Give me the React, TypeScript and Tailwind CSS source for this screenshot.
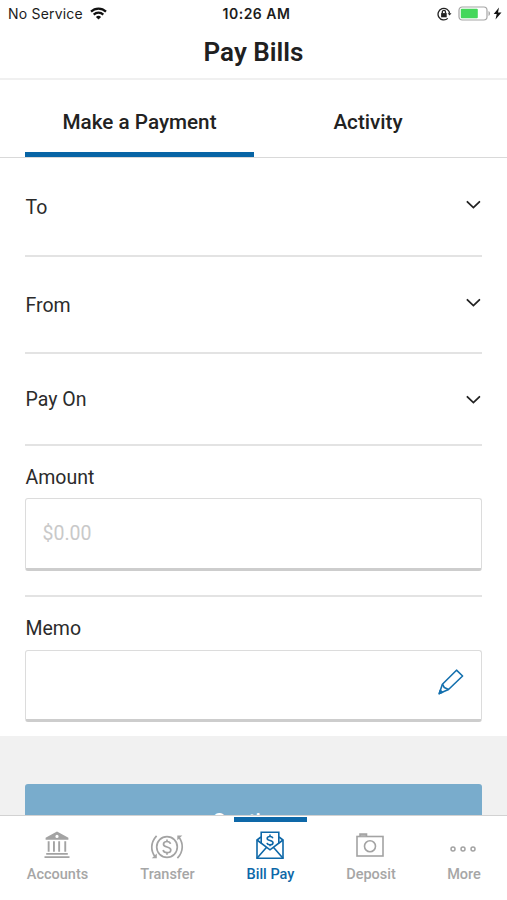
import React from "react";

const ROBOTO = "font-['Roboto',sans-serif]";

function StatusBar() {
  return (
    <div className="grid h-7 grid-cols-3 items-center pl-2 pr-[5px] font-['Inter',sans-serif] text-[14px] leading-7 text-[#1c1c1c]">
      <div className="flex items-center gap-[7px]">
        <span className="whitespace-nowrap tracking-[0.2px]">No Service</span>
        <svg className="-mt-px" width="17" height="13" viewBox="0 0 17 13" fill="none" stroke="#111" strokeWidth="2.2">
          <path d="M1 4.6a10.8 10.8 0 0 1 15 0" />
          <path d="M3.7 7.6a7 7 0 0 1 9.6 0" />
          <path d="M8.5 12.6 5.9 10a3.8 3.8 0 0 1 5.2 0z" fill="#111" stroke="none" />
        </svg>
      </div>
      <div className="whitespace-nowrap pl-[3px] text-center font-semibold tracking-[0.5px]">10:26 AM</div>
      <div className="flex items-center justify-end pb-px">
        <svg width="15" height="14" viewBox="0 0 15 14" fill="none" stroke="#222" strokeWidth="1.3">
          <path d="M10.8 11.4A5.8 5.8 0 1 1 12.6 6.5" />
          <path d="m10.6 6.3 2 2.3 1.9-2.3z" fill="#222" stroke="none" />
          <rect x="4.1" y="6.1" width="5.6" height="4.2" fill="#222" stroke="none" />
          <path d="M5.3 6.5V5a1.6 1.6 0 0 1 3.2 0v1.5" />
        </svg>
        <svg className="ml-[6px]" width="33" height="15" viewBox="0 0 33 15">
          <rect x="1" y="1" width="28" height="13" rx="3.2" fill="#fff" stroke="#a5a5a5" strokeWidth="1.2" />
          <rect x="2.8" y="2.8" width="17" height="9.4" rx="1" fill="#45d75b" />
          <path d="M30.5 5v5c2-.7 2-4.3 0-5z" fill="#a5a5a5" />
        </svg>
        <svg className="ml-[2px]" width="9" height="13" viewBox="0 0 9 13">
          <path d="M6 .5.7 7.1h3L2.5 12.5 8.5 5.4H5z" fill="#111" />
        </svg>
      </div>
    </div>
  );
}

function Chevron() {
  return (
    <svg width="16" height="10" viewBox="0 0 16 10" fill="none" stroke="#222" strokeWidth="1.8" strokeLinecap="round">
      <path d="m1.4 1.8 6 5.8 6-5.8" />
    </svg>
  );
}

function SelectRow({ label, className, iconClass }: { label: string; className: string; iconClass: string }) {
  return (
    <div className={`flex items-center justify-between border-b-2 border-[#e3e3e3] pl-[0.5px] ${className}`}>
      <span className="pt-[2px]">{label}</span>
      <span className={iconClass}>
        <Chevron />
      </span>
    </div>
  );
}

function Pencil() {
  return (
    <svg width="26" height="26" viewBox="0 0 26 26" fill="none" stroke="#1470ae" strokeWidth="1.6" strokeLinejoin="round">
      <path d="M18.5 1.2 24.6 7 10.5 20.5 1.3 24.6 4.4 15.2z" />
      <path d="m4.4 15.2 1.9 3.3 4.2 2" />
      <path d="m1.3 24.6 1-3.3 2.2 2z" fill="#1470ae" />
    </svg>
  );
}

function BankIcon() {
  return (
    <svg width="26" height="28" viewBox="0 0 26 28" fill="#a3a3a3">
      <path fillRule="evenodd" d="M13 .5 24.4 6.8v1.9H1.6V6.8zM13 3.8a1.6 1.6 0 1 0 0 3.2 1.6 1.6 0 0 0 0-3.2z" />
      <path d="M3.7 10.2h1.9v10.6H3.7zm5.3 0h1.9v10.6H9zm5.2 0h1.9v10.6h-1.9zm6.1 0h1.9v10.6h-1.9zM2.2 22.1h21.6v1.7H2.2zM.5 25.3h25V27H.5z" />
    </svg>
  );
}

function TransferIcon() {
  return (
    <svg width="34" height="28" viewBox="0 0 34 28" fill="none" stroke="#a3a3a3" strokeWidth="1.7">
      <circle cx="17" cy="15" r="10.3" />
      <path d="M20.5 11.9c-.4-1.6-1.7-2.4-3.5-2.4-2 0-3.5 1-3.5 2.7 0 3.7 7.3 1.8 7.3 5.7 0 1.7-1.6 2.7-3.8 2.7-2 0-3.5-.9-3.9-2.6M17 7.4v2.1m0 11.1v2.1" />
      <path d="M6.6 3.8C.1 10.8.7 19.1 5.2 25" />
      <path d="M1.8 26.3h5v-4.8z" fill="#a3a3a3" stroke="none" />
      <path d="M27.4 26.2c6.5-7 5.9-15.3 1.4-21.2" />
      <path d="M32.3 3.5h-5v4.8z" fill="#a3a3a3" stroke="none" />
    </svg>
  );
}

function BillIcon() {
  return (
    <svg width="28" height="29" viewBox="0 0 28 29" fill="none" stroke="#0e68a8" strokeWidth="1.6">
      <path d="M5.2 12.3V1.2h17.6v11.1" />
      <path d="M5 6 1 9v18.3h26V9l-4-3" />
      <path d="m1 9 13 9.8L27 9M1 27.3l9.6-11M27 27.3l-9.6-11" />
      <path d="M16.9 7.2c-.4-1.1-1.5-1.7-2.9-1.7-1.6 0-2.8.8-2.8 2 0 2.7 5.8 1.4 5.8 4.2 0 1.3-1.3 2.1-3 2.1s-2.7-.7-3-1.9M14 3.6v1.9m0 8.1v1.7" />
    </svg>
  );
}

function CameraIcon() {
  return (
    <svg width="28" height="24" viewBox="0 0 28 24" fill="none" stroke="#a3a3a3" strokeWidth="1.6">
      <rect x="1" y="3.5" width="26" height="19.5" />
      <path d="M4 3.5V1h6.5v2.5" fill="#b4b4b4" />
      <circle cx="14" cy="13.3" r="5.5" />
    </svg>
  );
}

function DotsIcon() {
  return (
    <svg width="26" height="6" viewBox="0 0 26 6" fill="none" stroke="#a3a3a3" strokeWidth="1.5">
      <circle cx="3" cy="3" r="2" />
      <circle cx="13" cy="3" r="2" />
      <circle cx="23" cy="3" r="2" />
    </svg>
  );
}

type NavItemProps = {
  label: string;
  icon: React.ReactNode;
  width: string;
  iconClass?: string;
  active?: boolean;
};

function NavItem({ label, icon, width, iconClass = "", active = false }: NavItemProps) {
  return (
    <button className={`flex flex-col items-center ${width} ${active ? "text-[#0e68a8]" : "text-[#a6a6a6]"}`}>
      <span className={`h-[5px] w-[73px] ${active ? "bg-[#0e68a8]" : ""}`} />
      <span className={`mt-2 flex h-[32px] items-center pr-[1.5px] ${iconClass}`}>{icon}</span>
      <span className="mt-[3px] text-[14.5px] font-medium leading-5">{label}</span>
    </button>
  );
}

export default function App() {
  return (
    <div className={`flex h-[900px] w-[507px] flex-col overflow-hidden bg-white text-[19.5px] text-[#2b2b2b] ${ROBOTO}`}>
      <header className="h-20 shrink-0 border-b-2 border-[#f0f0f0]">
        <StatusBar />
        <h1 className="text-center text-[26px] font-semibold leading-[49px] text-[#202020]">Pay Bills</h1>
      </header>
      <nav className="flex h-[78px] shrink-0 border-b border-[#d9d9d9] px-[25px] text-[20.7px] font-medium text-[#222]">
        <button className="w-[229px] border-b-[5px] border-[#0764a5] pt-[14px]">Make a Payment</button>
        <button className="w-[228px] pt-[9px]">Activity</button>
      </nav>
      <main className="min-h-0 flex-1 overflow-hidden">
        <div className="h-[578px] px-[25px]">
          <SelectRow label="To" className="h-[99px]" iconClass="pb-[3px]" />
          <SelectRow label="From" className="h-[97px]" iconClass="pb-[3px]" />
          <SelectRow label="Pay On" className="h-[92px]" iconClass="pt-[2px]" />
          <div className="flex h-[151px] flex-col border-b-2 border-[#e3e3e3] pt-[16px]">
            <label className="pl-[0.5px] leading-8">Amount</label>
            <div className="mt-[4px] flex h-[73px] items-center rounded-[3px] border border-b-[3px] border-[#dcdcdc] border-b-[#cdcdcd] pl-[16.5px] text-[#c9c9c9]">
              $0.00
            </div>
          </div>
          <div className="flex flex-col pt-[16px]">
            <label className="pl-[0.5px] leading-8">Memo</label>
            <div className="mt-[5px] flex h-[72px] items-center justify-end rounded-[3px] border border-b-[3px] border-[#dcdcdc] border-b-[#cdcdcd] pb-[6px] pr-[17px]">
              <Pencil />
            </div>
          </div>
        </div>
        <div className="h-40 bg-[#f1f1f1] px-[25px] pt-12">
          <button className="h-[73px] w-full rounded-[3px] bg-[#79accc] pt-[2px] text-[20.5px] font-medium text-white">Continue</button>
        </div>
      </main>
      <footer className="flex h-[85px] shrink-0 border-t border-[#d2d2d2] bg-white pt-px">
        <NavItem label="Accounts" icon={<BankIcon />} width="w-[115px]" iconClass="pb-[2px]" />
        <NavItem label="Transfer" icon={<TransferIcon />} width="w-[105px]" />
        <NavItem label="Bill Pay" icon={<BillIcon />} width="w-[101px]" iconClass="pb-[2px]" active />
        <NavItem label="Deposit" icon={<CameraIcon />} width="w-[100px]" iconClass="pb-[2px]" />
        <NavItem label="More" icon={<DotsIcon />} width="w-[86px]" iconClass="pt-[5px]" />
      </footer>
    </div>
  );
}
